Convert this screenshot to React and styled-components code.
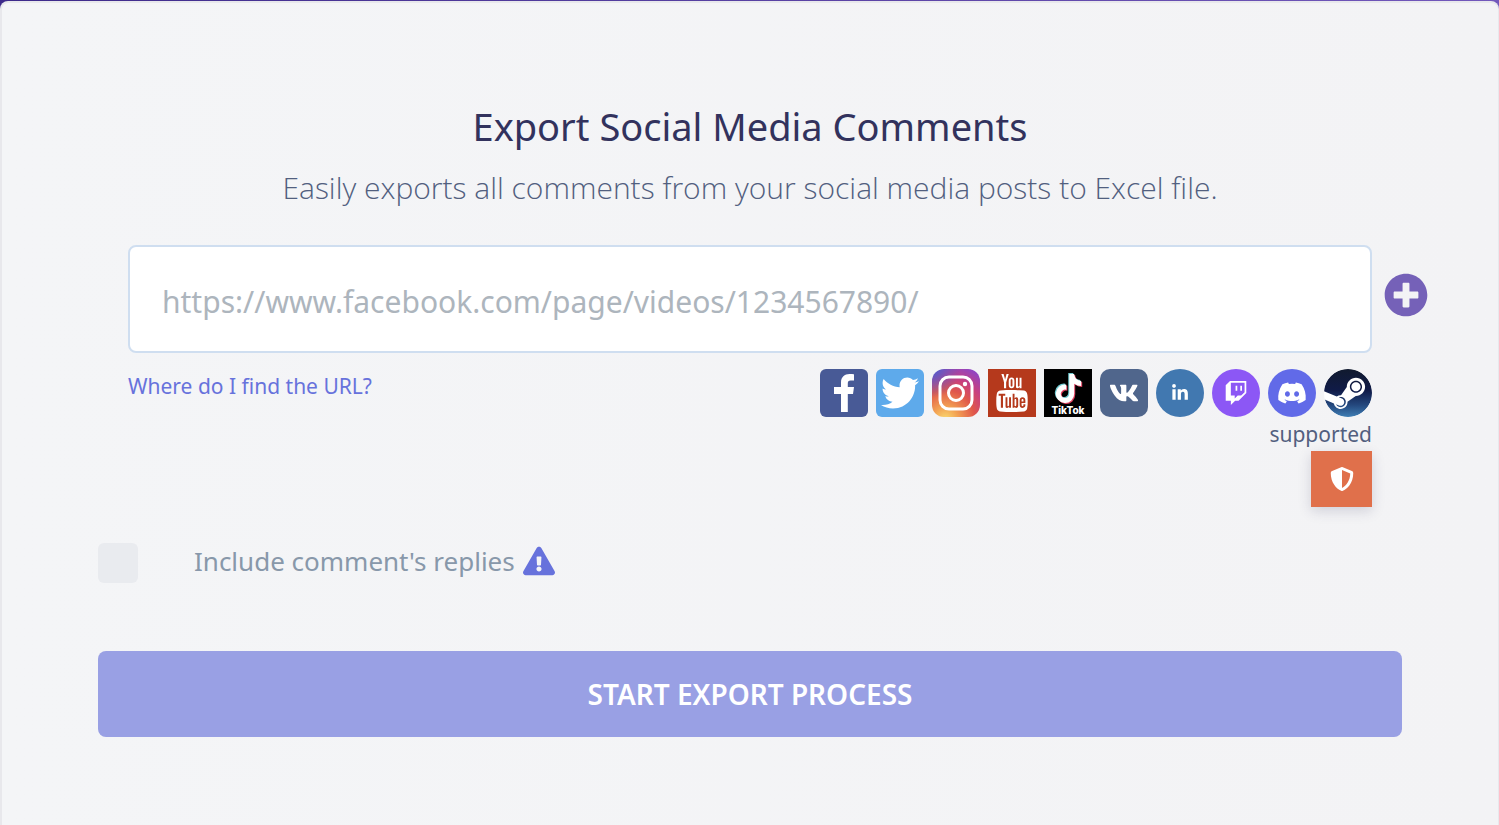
import React from 'react'
import styled, { createGlobalStyle } from 'styled-components'
import {
  FaTwitter,
  FaTiktok,
  FaVk,
  FaLinkedinIn,
  FaDiscord,
  FaSteam,
  FaPlusCircle,
  FaExclamationTriangle,
  FaShieldAlt,
} from 'react-icons/fa'
import { TfiYoutube } from 'react-icons/tfi'

const App = () => {
  return (
    <>
      <GlobalStyle />
      <Card>
        <Title>Export Social Media Comments</Title>
        <Subtitle>Easily exports all comments from your social media posts to Excel file.</Subtitle>

        <form onSubmit={(e) => e.preventDefault()}>
          <UrlRow>
            <UrlInput
              type="text"
              aria-label="Post URL"
              placeholder="https://www.facebook.com/page/videos/1234567890/"
            />
            <AddButton type="button" aria-label="Add another URL">
              <FaPlusCircle />
            </AddButton>
          </UrlRow>

          <HelpRow>
            <HelpLink href="#help">Where do I find the URL?</HelpLink>
            <Supported>
              <Networks>
                <Network $bg="#485a96" $size={48}><FacebookMark /></Network>
                <Network $bg="#5eaaeb" $size={38}><FaTwitter /></Network>
                <Network $bg={instagramGradient} $radius="12px" $size={48}><InstagramMark /></Network>
                <Network $bg="#b5391c" $radius="0" $size={38}><TfiYoutube /></Network>
                <Network $bg="#000" $radius="0" $size={48}><TiktokMark /></Network>
                <Network $bg="#50668c" $radius="10px" $size={30}><FaVk /></Network>
                <Network $bg="#4178b0" $radius="50%" $size={18}><FaLinkedinIn /></Network>
                <Network $bg="#8c57f5" $radius="50%" $size={24}><TwitchMark /></Network>
                <Network $bg="#616ae8" $radius="50%" $size={30}><FaDiscord /></Network>
                <Network $bg="#fff" $radius="50%" $size={48}><SteamMark /></Network>
              </Networks>
              <SupportedText>supported</SupportedText>
              <ShieldButton type="button" aria-label="Privacy">
                <FaShieldAlt />
              </ShieldButton>
            </Supported>
          </HelpRow>

          <ReplyRow>
            <Checkbox type="checkbox" id="replies" />
            <ReplyLabel htmlFor="replies">
              Include comment's replies
              <FaExclamationTriangle />
            </ReplyLabel>
          </ReplyRow>

          <SubmitButton type="submit">START EXPORT PROCESS</SubmitButton>
        </form>
      </Card>
    </>
  )
}

export default App

const FacebookMark = () => (
  <svg viewBox="0 0 48 48">
    <path
      fill="#fff"
      d="M21 43V25h-7v-7h7v-4.500C21 8 24.500 5 29.500 5c2 0 3.700.1 4.500.3v6.200h-3.300c-2.300 0-2.900 1.200-2.900 2.900V18h6.200l-1 7h-5.200v18z"
    />
  </svg>
)

const InstagramMark = () => (
  <svg viewBox="0 0 48 48" fill="none" stroke="#fff" strokeWidth="3">
    <rect x="8" y="8" width="32" height="32" rx="9" />
    <circle cx="24" cy="24" r="7.500" />
    <circle cx="33" cy="15" r="2.200" fill="#fff" stroke="none" />
  </svg>
)

const TwitchMark = () => (
  <svg viewBox="0 0 24 24">
    <path
      fill="#fff"
      d="M11.571 4.714h1.715v5.143H11.57zm4.715 0H18v5.143h-1.714zM6 0L1.714 4.286v15.428h5.143V24l4.286-4.286h3.428L22.286 12V0zm14.571 11.143l-3.428 3.428h-3.429l-3 3v-3H6.857V1.714h13.714Z"
    />
  </svg>
)

const TiktokMark = () => (
  <svg viewBox="0 0 48 48">
    <FaTiktok x="9" y="4" size="29" color="#6fc9d0" />
    <FaTiktok x="11" y="6" size="29" color="#e0405f" />
    <FaTiktok x="10" y="5" size="29" color="#fff" />
    <TiktokText x="24" y="45">TikTok</TiktokText>
  </svg>
)

const SteamMark = () => (
  <svg viewBox="0 0 48 48">
    <defs>
      <linearGradient id="steam" x1="0" y1="0" x2="0" y2="1">
        <stop offset="0" stopColor="#111a2e" />
        <stop offset="0.45" stopColor="#101b48" />
        <stop offset="0.75" stopColor="#24487e" />
        <stop offset="1" stopColor="#3f7fb5" />
      </linearGradient>
    </defs>
    <FaSteam x="-1" y="-1" size="50" fill="url(#steam)" />
  </svg>
)

const instagramGradient = `
  radial-gradient(circle at 0 0, #4c5fd0 0%, rgba(76, 95, 208, 0) 42%),
  radial-gradient(circle at 28% 105%, #fadb72 0%, #f3a353 20%, #e0574a 48%, #c8407f 68%, #8f45c4 92%)
`

const GlobalStyle = createGlobalStyle`
  * {
    box-sizing: border-box;
  }

  body {
    margin: 0;
    background: linear-gradient(90deg, #3d2a8a, #7258bb);
    font-family: 'Segoe UI', 'Noto Sans', 'Open Sans', sans-serif;
  }

  #root {
    padding-top: 1px;
  }
`

const Card = styled.main`
  min-height: calc(100vh - 1px);
  padding: 93px 96px 86px;
  border: 2px solid #e8e8ec;
  border-right-width: 1px;
  border-bottom: none;
  border-radius: 8px 8px 0 0;
  background: linear-gradient(90deg, #f4f5f7, #f3f3f5);
`

const Title = styled.h1`
  margin: 0;
  font-size: 38px;
  font-weight: 400;
  line-height: 60px;
  text-align: center;
  color: #32325d;
`

const Subtitle = styled.p`
  margin: 8px 0 33px;
  font-family: 'Segoe UI', 'Open Sans', sans-serif;
  font-size: 30px;
  font-weight: 300;
  line-height: 48px;
  text-align: center;
  color: #525f7f;
`

const UrlRow = styled.div`
  display: grid;
  grid-template-columns: 1fr 30px;
  align-items: center;
  padding-left: 30px;
`

const UrlInput = styled.input`
  width: 100%;
  height: 108px;
  padding: 4px 32px 0;
  border: 2px solid #cfdef0;
  border-radius: 8px;
  background: #fff;
  font-family: inherit;
  font-size: 30px;
  color: #525f7f;

  &::placeholder {
    color: #adb5bd;
    opacity: 1;
  }
`

const AddButton = styled.button`
  display: flex;
  width: 44px;
  height: 44px;
  margin: 0 0 8px 12px;
  padding: 0;
  border: none;
  background: none;
  color: #7561b8;
  font-size: 44px;
  cursor: pointer;
`

const HelpRow = styled.div`
  display: flex;
  align-items: flex-start;
  justify-content: space-between;
  padding: 16px 30px 0;
`

const HelpLink = styled.a`
  font-size: 21px;
  line-height: 34px;
  color: #6772dc;
  text-decoration: none;
`

const Supported = styled.div`
  display: flex;
  flex-direction: column;
  align-items: flex-end;
`

const Networks = styled.div`
  display: flex;
  gap: 8px;
`

const Network = styled.span`
  display: flex;
  align-items: center;
  justify-content: center;
  width: 48px;
  height: 48px;
  overflow: hidden;
  border-radius: ${({ $radius }) => $radius || '6px'};
  background: ${({ $bg }) => $bg};
  color: #fff;

  > svg {
    flex: none;
    width: ${({ $size }) => $size}px;
    height: ${({ $size }) => $size}px;
  }
`

const TiktokText = styled.text`
  font-family: Inter, sans-serif;
  font-size: 10px;
  font-weight: 800;
  text-anchor: middle;
  fill: #fff;
`

const SupportedText = styled.span`
  font-size: 21px;
  line-height: 34px;
  color: #525f7f;
`

const ShieldButton = styled.button`
  display: flex;
  align-items: center;
  justify-content: center;
  width: 61px;
  height: 56px;
  padding: 0;
  border: none;
  background: #e0704b;
  box-shadow: 0 4px 12px rgba(50, 50, 93, 0.18);
  color: #fff;
  font-size: 24px;
  cursor: pointer;
`

const ReplyRow = styled.div`
  display: flex;
  align-items: center;
  gap: 56px;
  margin: 36px 0 68px;
`

const Checkbox = styled.input`
  appearance: none;
  width: 40px;
  height: 40px;
  margin: 0;
  border-radius: 6px;
  background: #e9ebef;

  &:checked {
    background: #6772dc;
  }
`

const ReplyLabel = styled.label`
  display: flex;
  align-items: center;
  gap: 8px;
  padding-bottom: 4px;
  font-size: 26px;
  line-height: 36px;
  color: #8898aa;

  svg {
    width: 32px;
    height: 32px;
    color: #6772dc;
  }
`

const SubmitButton = styled.button`
  width: 100%;
  height: 86px;
  border: none;
  border-radius: 8px;
  background: #99a0e4;
  color: #fff;
  font-family: inherit;
  font-size: 28px;
  font-weight: 600;
  cursor: pointer;
`
